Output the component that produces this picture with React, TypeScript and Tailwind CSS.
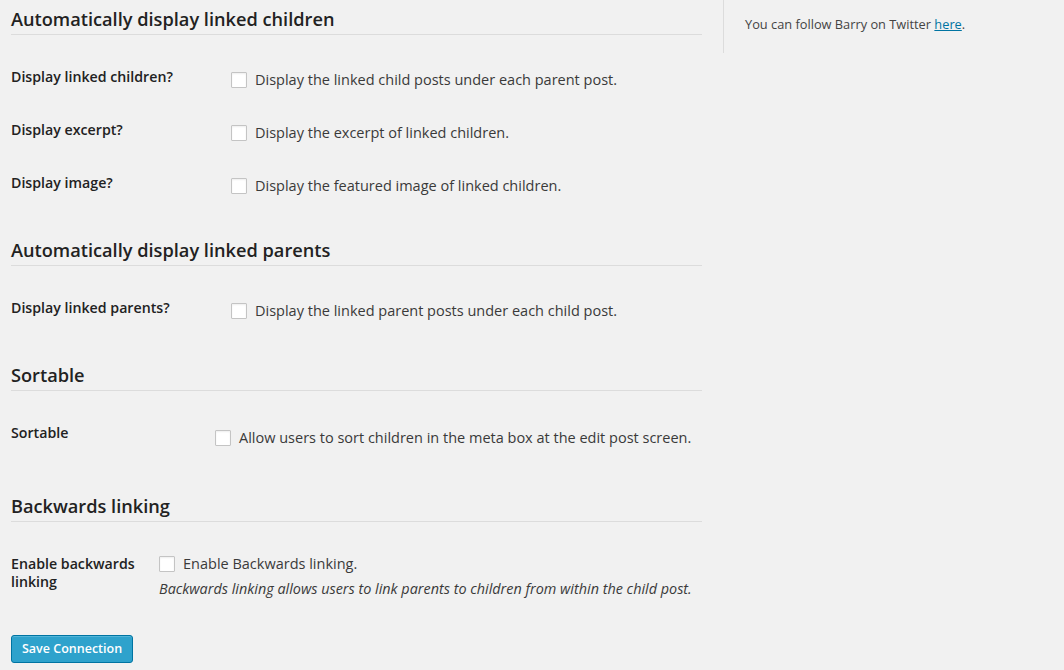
type Row = {
  label: string[];
  text: string;
  labelWidth: string;
  boxTop: string;
  note?: string;
};

type Section = {
  title: string;
  top: string;
  rows: Row[];
};

const sections: Section[] = [
  {
    title: "Automatically display linked children",
    top: "pt-[8px]",
    rows: [
      { label: ["Display linked children?"], text: "Display the linked child posts under each parent post.", labelWidth: "w-[220px]", boxTop: "pt-[24px]" },
      { label: ["Display excerpt?"], text: "Display the excerpt of linked children.", labelWidth: "w-[220px]", boxTop: "pt-[24px]" },
      { label: ["Display image?"], text: "Display the featured image of linked children.", labelWidth: "w-[220px]", boxTop: "pt-[24px]" },
    ],
  },
  {
    title: "Automatically display linked parents",
    top: "pt-[33px]",
    rows: [
      { label: ["Display linked parents?"], text: "Display the linked parent posts under each child post.", labelWidth: "w-[220px]", boxTop: "pt-[24px]" },
    ],
  },
  {
    title: "Sortable",
    top: "pt-[33px]",
    rows: [
      { label: ["Sortable"], text: "Allow users to sort children in the meta box at the edit post screen.", labelWidth: "w-[204px]", boxTop: "pt-[26px]" },
    ],
  },
  {
    title: "Backwards linking",
    top: "pt-[39px]",
    rows: [
      {
        label: ["Enable backwards", "linking"],
        text: "Enable Backwards linking.",
        labelWidth: "w-[148px]",
        boxTop: "pt-[21px]",
        note: "Backwards linking allows users to link parents to children from within the child post.",
      },
    ],
  },
];

function Checkbox() {
  return (
    <span className="block w-[16px] h-[16px] shrink-0 bg-white border border-[#c4c4c4] rounded-[1px] shadow-[inset_0_1px_2px_rgba(0,0,0,0.07)]" />
  );
}

function SettingRow({ row }: { row: Row }) {
  return (
    <div className={`flex ${row.note ? "" : "h-[53px]"}`}>
      <div className={`${row.labelWidth} shrink-0 pt-[21px] text-[14.2px] leading-[18px] font-semibold text-[#222]`}>
        {row.label.map((l) => (
          <div key={l}>{l}</div>
        ))}
      </div>
      <div className={row.boxTop}>
        <div className="flex items-center gap-[8px]">
          <Checkbox />
          <span className="text-[14.5px] leading-[16px] text-[#3a3a3a] pt-[1px]">{row.text}</span>
        </div>
        {row.note && (
          <p className="mt-[8px] text-[14.4px] leading-[18px] italic text-[#3a3a3a]">{row.note}</p>
        )}
      </div>
    </div>
  );
}

export default function App() {
  return (
    <div className="min-h-screen w-full bg-[#f1f1f1] font-['Open_Sans',sans-serif] flex items-start">
      <div className="w-[691px] ml-[11px] shrink-0">
        {sections.map((s) => (
          <section key={s.title} className={s.top}>
            <h2 className="text-[18.2px] leading-[23px] font-semibold text-[#222] pb-[3px] border-b border-[#dcdcdc]">
              {s.title}
            </h2>
            <div className="pt-[12px]">
              {s.rows.map((r) => (
                <SettingRow key={r.text} row={r} />
              ))}
            </div>
          </section>
        ))}
        <div className="pt-[37px]">
          <button className="h-[28px] px-[10px] rounded-[3px] bg-[#2ea2cc] border border-[#0074a2] shadow-[inset_0_1px_0_rgba(120,200,230,0.5)] text-white text-[12.5px] font-semibold leading-[26px]">
            Save Connection
          </button>
        </div>
      </div>
      <aside className="ml-[21px] h-[53px] border-l border-[#dcdcdc] pl-[21px] pt-[15px]">
        <p className="text-[12.8px] leading-[18px] text-[#444]">
          You can follow Barry on Twitter{" "}
          <a href="#" className="text-[#0074a2] underline">here</a>.
        </p>
      </aside>
    </div>
  );
}
